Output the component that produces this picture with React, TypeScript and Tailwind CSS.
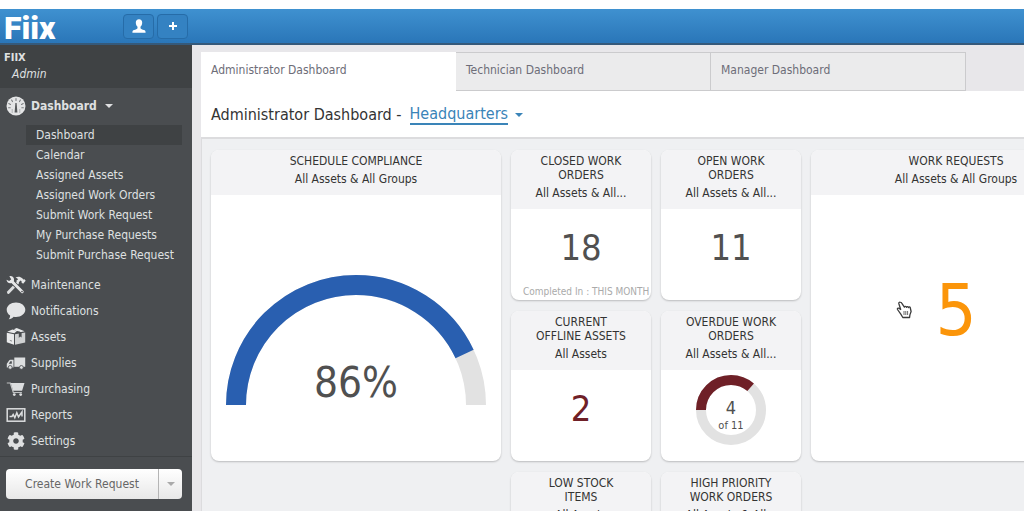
import React, { useState } from 'react';
import { FaCog } from 'react-icons/fa';

interface NavItem {
  label: string;
  icon: React.ReactNode;
}

interface WidgetProps {
  title: string;
  subtitle: string;
  className?: string;
  children?: React.ReactNode;
}

const Caret: React.FC<{ className?: string }> = ({ className }) => (
  <svg viewBox="0 0 8 4" className={`h-1 w-2 ${className ?? ''}`} fill="currentColor" aria-hidden="true">
    <path d="M0 0h8L4 4z" />
  </svg>
);

const GaugeIcon = () => (
  <svg viewBox="0 0 20 20" className="size-5" aria-hidden="true">
    <circle cx="10" cy="10" r="9.5" fill="#e4e5e6" />
    <g stroke="#7b7e80" strokeWidth="1.1" strokeLinecap="round">
      <path d="M10 2.5v2M5.6 4l.9 1.6M14.4 4l-.9 1.6M2.8 7.6l1.7.8M17.2 7.6l-1.7.8M2.6 11.8h1.600M17.4 11.8h-1.600" />
    </g>
    <path d="M9.4 7h1.2l.8 9.5H8.6z" fill="#55585a" />
    <path d="M6.2 13v4M13.8 13v4" stroke="#b0b3b5" strokeWidth="1" />
  </svg>
);

const ToolsIcon = () => (
  <svg viewBox="0 0 20 20" className="size-5" aria-hidden="true">
    <path d="M2.5 17.3 11.5 8" stroke="#dcdedf" strokeWidth="3" strokeLinecap="round" />
    <path d="M9.5 2.6c2.4-1.4 5-1 6.8.7l1 1.2 1.2-.3 1.2 1.5-2.6 3-1.6-1.3.1-1.2-1.1-.8-2.4 2.5-2-1.8 2-1.8c-.6-.9-1.5-1.4-2.6-1.8z" fill="#e6e7e8" />
    <path d="M5.5 6 16.2 17" stroke="#4a4d50" strokeWidth="4.6" />
    <path d="M5.5 6 16.200 16.700" stroke="#e6e7e8" strokeWidth="3" strokeLinecap="round" />
    <path d="M3.4 1.2c2-.6 4.2.5 4.6 2.7.4 2.3-1.3 4.3-3.5 4.4C2.3 8.400.6 6.800.5 4.800l2.600 1.300 2.200-1.500z" fill="#e6e7e8" />
    <circle cx="16" cy="16.6" r=".8" fill="#4a4d50" />
  </svg>
);

const ChatIcon = () => (
  <svg viewBox="0 0 20 20" className="size-5" aria-hidden="true">
    <path d="M10 1.5c5.2 0 9.3 3.2 9.3 7.2s-4.1 7.2-9.3 7.2c-.8 0-1.6-.1-2.3-.2-1.3 1.5-3 2.3-5 2.5 1-1 1.500-2.200 1.400-3.700C2 13.200.7 11 .7 8.700c0-4 4.100-7.200 9.300-7.200z" fill="#e4e5e6" />
  </svg>
);

const BoxIcon = () => (
  <svg viewBox="0 0 20 20" className="size-5" aria-hidden="true">
    <path d="M.8 5.800 8 7.300v10.500L.8 15.300z" fill="#e9eaeb" />
    <path d="M9 7.300 19.200 5.500v10L9 17.800z" fill="#cfd1d2" />
    <path d="M1.200 4.700 6.400 2.600l4.800 1.200-2.900 2.400zM7.800 2.200 10.700 1l7.900 3.300-4.600.9z" fill="#e9eaeb" />
    <path d="m12.300 4 3.300 1.400v5l-1.500-1-1.300 1.500V6z" fill="#4a4d50" />
    <path d="m3.800 13.400 2.200.7" stroke="#8b8e90" />
  </svg>
);

const TruckIcon = () => (
  <svg viewBox="0 0 20 20" className="size-5" fill="#dcdedf" aria-hidden="true">
    <path d="M8.300 4.500h10.900v9.300H8.300z" />
    <path d="M7.500 6.800v7.600H.8v-3.600l2.300-3.400c.3-.4.700-.6 1.200-.6zM5.800 8.200H4.400l-1.700 2.600h3.100z" fillRule="evenodd" />
    <circle cx="4.200" cy="14.400" r="1.900" stroke="#4a4d50" strokeWidth=".8" />
    <circle cx="15.400" cy="14.400" r="1.900" stroke="#4a4d50" strokeWidth=".8" />
  </svg>
);

const CartIcon = () => (
  <svg viewBox="0 0 20 20" className="size-5" fill="#dcdedf" aria-hidden="true">
    <path d="M.8 4h3.500l3 9.500h8.600" fill="none" stroke="#bfc1c2" strokeWidth="1.200" />
    <path d="M4.700 4h13.800l-2.400 7.800H7.200z" />
    <circle cx="8.300" cy="15.600" r="1.400" />
    <circle cx="14.700" cy="15.600" r="1.400" />
  </svg>
);

const ReportIcon = () => (
  <svg viewBox="0 0 20 20" className="size-5" fill="none" stroke="#dcdedf" aria-hidden="true">
    <rect x="1.200" y="3.800" width="17.600" height="12.400" strokeWidth="1.500" />
    <path d="M3.500 11.500H6l1.200-2 1.600 3.200 2-5 1.700 4.300 3.500-5v4.500" strokeWidth="1.500" />
  </svg>
);

const UserIcon = () => (
  <svg viewBox="0 0 14 14" className="size-3.5" fill="#fff" aria-hidden="true">
    <path d="M7 .3c2 0 3.300 1.400 3.200 3.500-.1 1.800-.8 3.200-1.700 4v1.500c.3.900 2 1.300 3.400 1.700 1.200.4 1.700 1 1.700 2.700H.4c0-1.700.5-2.300 1.700-2.700 1.400-.4 3.100-.8 3.400-1.700V7.800c-.9-.8-1.600-2.200-1.700-4C3.700 1.700 5 .3 7 .3z" />
  </svg>
);

const HandPointer = () => (
  <svg viewBox="0 0 16 18" className="absolute top-[151px] left-[85px] h-[18px] w-4" aria-hidden="true">
    <path
      d="M4.300 1.200c-.9-.3-1.700.4-1.500 1.300l1.900 6-1.800-1.300c-.9-.5-1.900.4-1.400 1.300l3.300 4.700 2 3.300h6.800l.3-2.600 1.200-3.400-.9-4c-.3-.9-1.500-.9-1.700.1-.2-1.200-1.800-1.400-2-.2-.3-1.200-1.900-1.300-2.100-.2L5.700 2.100c-.2-.5-.8-.8-1.400-.9z"
      fill="#fff"
      stroke="#3c3c3c"
      strokeWidth="1.300"
      strokeLinejoin="round"
    />
    <path d="M8 10v4M9.800 10v4M11.600 10v4" stroke="#6a6a6a" strokeWidth="1" />
  </svg>
);

const dashboardLinks = [
  'Dashboard',
  'Calendar',
  'Assigned Assets',
  'Assigned Work Orders',
  'Submit Work Request',
  'My Purchase Requests',
  'Submit Purchase Request',
];

const navItems: NavItem[] = [
  { label: 'Maintenance', icon: <ToolsIcon /> },
  { label: 'Notifications', icon: <ChatIcon /> },
  { label: 'Assets', icon: <BoxIcon /> },
  { label: 'Supplies', icon: <TruckIcon /> },
  { label: 'Purchasing', icon: <CartIcon /> },
  { label: 'Reports', icon: <ReportIcon /> },
  { label: 'Settings', icon: <FaCog className="size-[18px]" /> },
];

const tabs = ['Administrator Dashboard', 'Technician Dashboard', 'Manager Dashboard'];

const Widget: React.FC<WidgetProps> = ({ title, subtitle, className, children }) => (
  <section className={`relative flex flex-col overflow-hidden rounded-lg bg-white shadow-[0_1px_2px_rgba(0,0,0,0.22)] ${className ?? ''}`}>
    <header className="bg-[#f3f3f5] px-5 pt-1 pb-[9px] text-center text-xs leading-[14px] text-[#333]">
      <h2>{title}</h2>
      <p className="mt-1 whitespace-nowrap">{subtitle}</p>
    </header>
    <div className="flex flex-1 flex-col items-center justify-center">{children}</div>
  </section>
);

const TopBar = () => (
  <header className="flex h-9 shrink-0 items-center border-b-2 border-[#35597a] bg-linear-to-b from-[#3f91d0] to-[#2a76b8] pl-1">
    <a href="#" className="w-[119px] pt-1 font-['Roboto',sans-serif] text-[32px] leading-8 font-black text-white">
      Fiix
    </a>
    <div className="flex gap-[3px]">
      <button aria-label="Profile" className="flex h-[25px] w-[31px] items-center justify-center rounded border border-[#266ca8] bg-[#3482c2]">
        <UserIcon />
      </button>
      <button aria-label="Add" className="flex h-[25px] w-[31px] items-center justify-center rounded border border-[#266ca8] bg-[#3482c2]">
        <svg viewBox="0 0 8 8" className="size-2" stroke="#fff" strokeWidth="2" aria-hidden="true">
          <path d="M4 0v8M0 4h8" />
        </svg>
      </button>
    </div>
  </header>
);

const Sidebar = () => {
  const [open, setOpen] = useState<boolean>(true);

  return (
    <aside className="flex w-48 shrink-0 flex-col bg-[#4a4d50] text-xs text-[#dfe0e1]">
      <div className="h-[43px] bg-[#3f4244] px-1 pt-[5px] leading-4">
        <p className="text-[11px] font-bold">FIIX</p>
        <p className="pl-2 italic">Admin</p>
      </div>
      <nav className="border-b border-[#3f4244] pb-0.5">
        <button onClick={() => setOpen(!open)} className="flex h-9 w-full items-center pl-1.5 text-xs font-bold">
          <GaugeIcon />
          <span className="mr-2 ml-[5px]">Dashboard</span>
          <Caret />
        </button>
        {open && (
          <ul className="mb-[7px] pt-px pr-2.5 pl-[26px]">
            {dashboardLinks.map((label, index) => (
              <li key={label}>
                <a href="#" className={`block h-5 pl-2.5 leading-5 whitespace-nowrap ${index === 0 ? 'bg-[#3f4244]' : ''}`}>
                  {label}
                </a>
              </li>
            ))}
          </ul>
        )}
        {navItems.map((item) => (
          <a key={item.label} href="#" className="flex h-[26px] items-center pl-1.5">
            <span className="flex w-5 justify-center">{item.icon}</span>
            <span className="ml-[5px]">{item.label}</span>
          </a>
        ))}
      </nav>
      <div className="mt-3 mr-2.5 ml-1.5 flex h-[30px] overflow-hidden rounded-sm bg-linear-to-b from-white to-[#e8e8e8] text-[#666]">
        <button className="flex-1 text-xs">Create Work Request</button>
        <button aria-label="More create options" className="flex w-6 items-center justify-center border-l border-[#b5b5b5] text-[#aaa]">
          <Caret />
        </button>
      </div>
    </aside>
  );
};

const App: React.FC = () => {
  const [activeTab, setActiveTab] = useState<number>(0);

  return (
    <div className="flex h-screen flex-col overflow-hidden bg-white pt-[9px] pb-px font-['DejaVu_Sans_Condensed','DejaVu_Sans',sans-serif]">
      <TopBar />
      <div className="flex min-h-0 flex-1">
        <Sidebar />
        <main className="flex min-w-0 flex-1 flex-col overflow-hidden bg-[#e8e7ea] pt-[7px] pl-[9px]">
          <div className="flex h-[39px] shrink-0">
            {tabs.map((tab, index) => (
              <button
                key={tab}
                onClick={() => setActiveTab(index)}
                className={`w-[255px] px-2.5 pb-1 text-left text-xs text-[#6d6d78] ${
                  index === activeTab ? 'bg-white' : 'border border-l-0 border-[#cbcbcd] bg-[#ebebec] first:border-l'
                }`}
              >
                {tab}
              </button>
            ))}
          </div>
          <div className="flex h-12 shrink-0 items-center border-b-2 border-[#dcdcde] bg-white px-2.5 pt-0.5 text-base text-[#333]">
            <h1>Administrator Dashboard -</h1>
            <button className="ml-2 flex items-center text-[#3a84b8]">
              <span className="border-b-2 border-[#3a84b8] leading-[18px]">Headquarters</span>
              <Caret className="ml-[7px]" />
            </button>
          </div>
          <div className="min-h-0 flex-1 overflow-hidden border-l border-[#dcdcde] bg-[#eff0f2] pt-[11px] pl-[9px]">
            <div className="grid auto-rows-[150px] grid-cols-[repeat(6,140px)] gap-x-2.5 gap-y-[11px]">
              <Widget title="SCHEDULE COMPLIANCE" subtitle="All Assets & All Groups" className="col-span-2 row-span-2">
                <svg viewBox="0 0 260 130" className="mt-6 w-[260px] overflow-visible" fill="none" strokeWidth="20">
                  <path d="M10 130a120 120 0 0 1 240 0" stroke="#e2e2e2" />
                  <path d="M10 130a120 120 0 0 1 240 0" pathLength="100" strokeDasharray="86 100" stroke="#295fb0" />
                  <text x="130" y="122" textAnchor="middle" fill="#505050" stroke="none" className="text-[42px]">
                    86%
                  </text>
                </svg>
              </Widget>
              <Widget title="CLOSED WORK ORDERS" subtitle="All Assets & All...">
                <p className="pb-3.5 text-4xl leading-10 text-[#505050]">18</p>
                <p className="absolute bottom-0 left-3 text-[10px] leading-4 whitespace-nowrap text-[#aaa]">Completed In : THIS MONTH</p>
              </Widget>
              <Widget title="OPEN WORK ORDERS" subtitle="All Assets & All...">
                <p className="pb-3.5 text-4xl leading-10 text-[#505050]">11</p>
              </Widget>
              <Widget title="WORK REQUESTS" subtitle="All Assets & All Groups" className="col-span-2 row-span-2">
                <p className="pb-9 text-7xl text-[#fb950a]">5</p>
                <HandPointer />
              </Widget>
              <Widget title="CURRENT OFFLINE ASSETS" subtitle="All Assets">
                <p className="pb-3.5 text-4xl leading-10 text-[#6f2027]">2</p>
              </Widget>
              <Widget title="OVERDUE WORK ORDERS" subtitle="All Assets & All...">
                <svg viewBox="0 0 70 70" className="mb-3 w-[70px]" fill="none" strokeWidth="10">
                  <circle cx="35" cy="35" r="30" stroke="#e2e2e2" />
                  <path d="M5 35a30 30 0 0 1 60 0a30 30 0 0 1-60 0" pathLength="11" strokeDasharray="4 11" stroke="#6f2027" />
                  <text x="35" y="39" textAnchor="middle" fill="#505050" stroke="none" className="text-lg">
                    4
                  </text>
                  <text x="35" y="54" textAnchor="middle" fill="#505050" stroke="none" className="text-[11px]">
                    of 11
                  </text>
                </svg>
              </Widget>
              <Widget title="LOW STOCK ITEMS" subtitle="All Assets" className="col-start-3" />
              <Widget title="HIGH PRIORITY WORK ORDERS" subtitle="All Assets & All..." />
            </div>
          </div>
        </main>
      </div>
    </div>
  );
};

export default App;
